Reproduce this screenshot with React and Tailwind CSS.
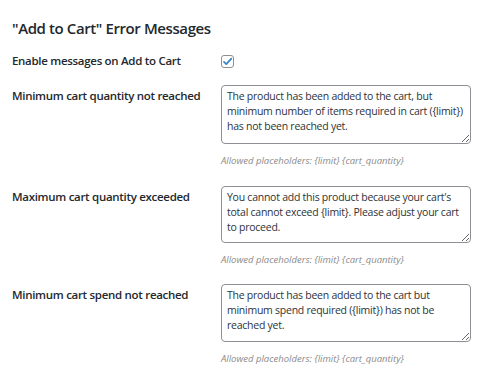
const rows = [
  {
    label: 'Minimum cart quantity not reached',
    text: 'The product has been added to the cart, but minimum number of items required in cart ({limit}) has not been reached yet.',
    box: 'h-[59px]',
    gap: 'mb-[18px]',
  },
  {
    label: 'Maximum cart quantity exceeded',
    text: "You cannot add this product because your cart's total cannot exceed {limit}. Please adjust your cart to proceed.",
    box: 'h-[57px]',
    gap: 'mb-[17px]',
  },
  {
    label: 'Minimum cart spend not reached',
    text: 'The product has been added to the cart but minimum spend required ({limit}) has not be reached yet.',
    box: 'h-[58px]',
    gap: 'mb-[17px]',
  },
];

const MessageRow = ({ label, text, box, gap }) => (
  <div className={`flex ${gap}`}>
    <div className="w-[209px] shrink-0 pt-[3px] text-[11.5px] leading-[16px] tracking-[-0.3px] font-semibold text-[#23282d]">
      {label}
    </div>
    <div className="flex flex-col">
      <textarea
        defaultValue={text}
        className={`w-[250px] ${box} border border-[#8c8f94] rounded-[4px] bg-white pl-[5px] pr-[4px] pt-[3px] text-[10.5px] leading-[15px] tracking-[-0.25px] text-[#2c3338] resize-y outline-none`}
      />
      <p className="mt-[10px] text-[9.5px] leading-[14px] italic text-[#8a8a8a]">
        Allowed placeholders: {'{limit}'} {'{cart_quantity}'}
      </p>
    </div>
  </div>
);

export default function App() {
  return (
    <div className="w-[492px] h-[374px] bg-white px-[12px] pt-[17px] overflow-hidden" style={{ fontFamily: '"Open Sans", sans-serif' }}>
      <h2 className="text-[15px] leading-[22px] tracking-[-0.4px] font-semibold text-[#23282d]">"Add to Cart" Error Messages</h2>
      <div className="flex items-center mt-[14px] mb-[16px]">
        <div className="w-[209px] shrink-0 text-[11.5px] leading-[16px] tracking-[-0.3px] font-semibold text-[#23282d]">
          Enable messages on Add to Cart
        </div>
        <span className="w-[13px] h-[13px] border border-[#8c8f94] rounded-[3px] bg-white flex items-center justify-center">
          <svg width="11" height="11" viewBox="0 0 20 20">
            <path d="M3.5 10.5l4.2 4.2L17 4.8" fill="none" stroke="#3582c4" strokeWidth="3" strokeLinecap="round" strokeLinejoin="round" />
          </svg>
        </span>
      </div>
      {rows.map((r) => (
        <MessageRow key={r.label} {...r} />
      ))}
    </div>
  );
}
